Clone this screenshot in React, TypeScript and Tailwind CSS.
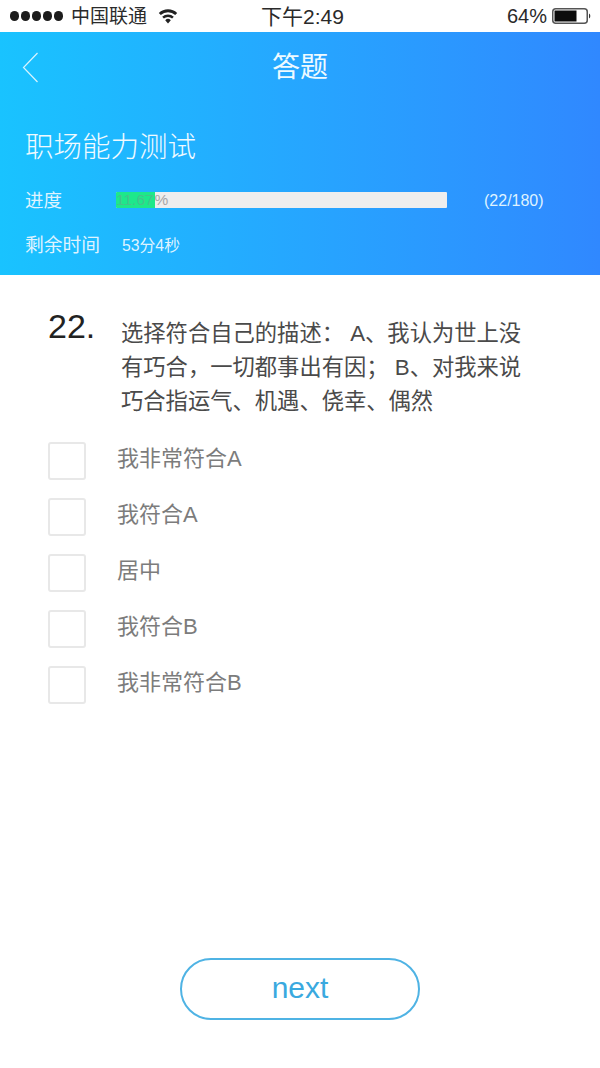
const sans = 'font-["Liberation_Sans","Noto_Sans_CJK_SC",sans-serif]'

const options = ['我非常符合A', '我符合A', '居中', '我符合B', '我非常符合B']

function StatusBar() {
  return (
    <div className="h-8 bg-white flex items-center pl-2.5 pr-[9px] text-[#2a2a2a] relative text-[19px] leading-none">
      <div className="flex items-center gap-[1.5px]">
        {[0, 1, 2, 3, 4].map((i) => (
          <span key={i} className="w-[9.4px] h-[9.4px] rounded-full bg-[#1c1c1c]" />
        ))}
      </div>
      <span className="ml-[8px]">中国联通</span>
      <svg className="ml-[11px]" width="20" height="15" viewBox="0 0 20 15" fill="#222">
        <path d="M10 14.5 7.2 11.2a4 4 0 0 1 5.6 0L10 14.5Z" />
        <path d="M5.9 9.6 4.2 7.7a8.6 8.6 0 0 1 11.6 0l-1.7 1.9a6 6 0 0 0-8.2 0Z" />
        <path d="M2.8 6.1.8 4a13.4 13.4 0 0 1 18.4 0l-2 2.1a10.6 10.6 0 0 0-14.4 0Z" />
      </svg>
      <span className="absolute left-[261px] top-[6px] text-[21px]">下午2:49</span>
      <div className="ml-auto flex items-center gap-[5px]">
        <span className="text-[20px]">64%</span>
        <svg width="39" height="16" viewBox="0 0 39 16">
          <rect x="0.75" y="0.75" width="34.5" height="14.5" rx="3" fill="none" stroke="#555" strokeWidth="1.5" />
          <rect x="2.5" y="2.5" width="22" height="11" fill="#0c0c0c" />
          <path d="M37 5.5a3 3 0 0 1 0 5Z" fill="#333" />
        </svg>
      </div>
    </div>
  )
}

function Header() {
  return (
    <div className="h-[243px] bg-gradient-to-r from-[#19c3ff] to-[#3088ff] text-white px-[25px]">
      <div className="h-[70px] flex items-center justify-center relative">
        <svg className="absolute left-[-3px] top-[20px]" width="17" height="31" viewBox="0 0 17 31" fill="none" stroke="#d8f4ff" strokeWidth="1.2">
          <path d="M15.5 1 1.5 15.5 15.5 30" />
        </svg>
        <span className="text-[28px] leading-none text-[#eefaff] mt-[1px]">答题</span>
      </div>
      <h1 className="mt-[27px] text-[28.5px] leading-[36px] font-light text-[#f0faff]">职场能力测试</h1>
      <div className="mt-[23px] flex items-center h-6">
        <span className="w-[91px] text-[18.5px] text-[#dff3ff] mt-[1px]">进度</span>
        <div className="w-[331px] h-4 bg-[#eeeeee] rounded-[1px] flex text-[15.5px] leading-4 text-[#a6a6a6] overflow-hidden">
          <div className="w-[38.6px] bg-[#1ee88a] text-[#44c48c] whitespace-nowrap">11.67</div>
          <span>%</span>
        </div>
        <span className="ml-[37px] text-[16px] text-[#dff3ff] mt-[1px]">(22/180)</span>
      </div>
      <div className="mt-[22px] flex items-center h-6">
        <span className="w-[97px] text-[18.8px] text-[#dff3ff] whitespace-nowrap">剩余时间</span>
        <span className="text-[15.8px] text-[#dff3ff]">53分4秒</span>
      </div>
    </div>
  )
}

function Question() {
  return (
    <div className="pl-12 pt-[42px]">
      <div className="flex">
        <span className="w-[73px] text-[34px] leading-[44px] text-[#222] -mt-[13px] shrink-0">22.</span>
        <p className="w-[412px] text-[22.3px] leading-[34px] text-[#4a4a4a]">
          选择符合自己的描述： A、我认为世上没有巧合，一切都事出有因； B、对我来说巧合指运气、机遇、侥幸、偶然
        </p>
      </div>
      <div className="mt-[23px] flex flex-col gap-[18px]">
        {options.map((o) => (
          <div key={o} className="flex items-center h-[38px]">
            <span className="w-[38px] h-[38px] border-2 border-[#e8e8e8] rounded-[3px] bg-white" />
            <span className="ml-[31px] text-[22px] text-[#7c7c7c] -mt-[6px]">{o}</span>
          </div>
        ))}
      </div>
    </div>
  )
}

export default function App() {
  return (
    <div className={`w-[600px] h-[1068px] bg-white overflow-hidden flex flex-col ${sans}`}>
      <StatusBar />
      <Header />
      <Question />
      <div className="mt-auto mb-[48px] flex justify-center">
        <button className="w-[240px] h-[62px] rounded-full border-2 border-[#4fb3e4] text-[#3aa9df] text-[30px] leading-none pb-[2px] bg-white">
          next
        </button>
      </div>
    </div>
  )
}
